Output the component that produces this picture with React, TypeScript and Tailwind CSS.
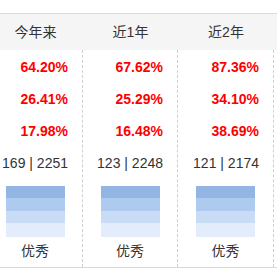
import React from "react";

const cols = [
  { title: "今年来", vals: ["64.20%", "26.41%", "17.98%"], rank: "169 | 2251", w: "w-[95px]" },
  { title: "近1年", vals: ["67.62%", "25.29%", "16.48%"], rank: "123 | 2248", w: "w-[95px]" },
  { title: "近2年", vals: ["87.36%", "34.10%", "38.69%"], rank: "121 | 2174", w: "w-[96px]" },
];

export default function App() {
  return (
    <div
      className="w-[277px] h-[269px] overflow-hidden bg-white"
      style={{ fontFamily: '"Liberation Sans", Arial, "Noto Sans CJK SC", sans-serif' }}
    >
      <div className="h-[13px]" />
      <div className="border-t border-[#dcdcdc] bg-[#f5f5f5] h-[37px] flex -ml-[12px]">
        {cols.map((c) => (
          <div key={c.title} className={`${c.w} flex items-center justify-center text-[14px] text-[#333] leading-none`}>
            {c.title}
          </div>
        ))}
      </div>
      <div className="flex -ml-[12px] w-[298px] border-b border-[#d8d8d8]">
        {cols.map((c) => (
          <div key={c.title} className={`${c.w} border-r border-dashed border-[#cfcfcf] pt-[1px] pb-[6px] flex flex-col`}>
            {c.vals.map((v) => (
              <div key={v} className="h-[32px] flex items-center justify-end pr-[14px] text-[14px] font-bold text-[#ff0000]">
                {v}
              </div>
            ))}
            <div className="h-[32px] flex items-center justify-end pr-[14px] text-[14px] text-[#333]">
              {c.rank}
            </div>
            <div className="mt-[7px] mx-auto w-[59px] flex flex-col">
              <div className="h-[12px] bg-[#93b5e4]" />
              <div className="h-[13px] bg-[#aecaee]" />
              <div className="h-[12px] bg-[#c9dcf6]" />
              <div className="h-[14px] bg-[#e2ecfb]" />
            </div>
            <div className="mt-[4px] h-[20px] flex items-center justify-center text-[14px] text-[#333]">
              优秀
            </div>
          </div>
        ))}
      </div>
    </div>
  );
}
